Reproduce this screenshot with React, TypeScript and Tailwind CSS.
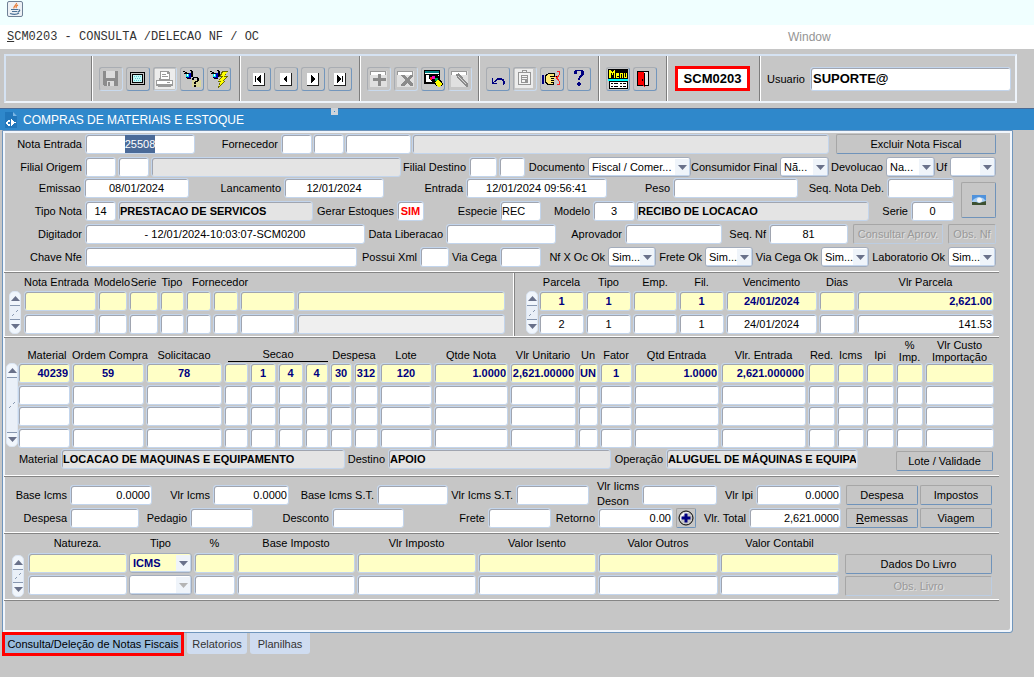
import { useEffect, useId, useRef, type ReactNode, type RefObject } from "react";
import { cx } from "class-variance-authority";

const FIELD_LOOK = {
  white: "bg-white text-black",
  info: "bg-[#e4e4e4] font-bold text-black",
  shade: "bg-[#efefef] text-black",
  current: "bg-[#ffffc6] font-bold text-[#000080]",
  alert: "bg-white font-bold text-[#ff0000]",
};

const ALIGN = {
  left: "text-left",
  center: "text-center",
  right: "text-right",
};

type Look = keyof typeof FIELD_LOOK;
type Align = keyof typeof ALIGN;

const INPUT_BASE =
  "h-5 min-w-0 rounded-[3px] border border-[#c3d5ec] px-px outline-none shadow-[inset_1px_1px_0_#a0a5b0] selection:bg-[#4a6a98] selection:text-white";

type FieldProps = {
  label?: string;
  name?: string;
  labelClass?: string;
  className: string;
  value?: string;
  align?: Align;
  look?: Look;
  inputRef?: RefObject<HTMLInputElement | null>;
};

function Label({ id, className, children }: { id: string; className?: string; children: ReactNode }) {
  return (
    <label htmlFor={id} className={cx("shrink-0 pr-[3px] text-right whitespace-nowrap", className)}>
      {children}
    </label>
  );
}

function Field({ label, name, labelClass, className, value = "", align = "left", look = "white", inputRef }: FieldProps) {
  const id = useId();
  return (
    <>
      {label && (
        <Label id={id} className={labelClass}>
          {label}
        </Label>
      )}
      <input
        id={id}
        ref={inputRef}
        aria-label={label ? undefined : name}
        defaultValue={value}
        readOnly={look === "info"}
        className={cx(INPUT_BASE, FIELD_LOOK[look], ALIGN[align], className)}
      />
    </>
  );
}

function Arrow({ down, dim }: { down?: boolean; dim?: boolean }) {
  return (
    <svg width="9" height="5" viewBox="0 0 9 5" className={dim ? "fill-[#b4b4b4]" : "fill-[#69718a]"}>
      <path d={down ? "M0 0h9L4.5 5z" : "M0 5h9L4.5 0z"} />
    </svg>
  );
}

type DropDownProps = {
  label?: string;
  name?: string;
  labelClass?: string;
  className: string;
  value?: string;
  look?: Look;
  disabled?: boolean;
};

function DropDown({ label, name, labelClass, className, value = "", look = "white", disabled }: DropDownProps) {
  const id = useId();
  return (
    <>
      {label && (
        <Label id={id} className={labelClass}>
          {label}
        </Label>
      )}
      <span className={cx("relative h-5", className)}>
        <select
          id={id}
          aria-label={label ? undefined : name}
          disabled={disabled}
          className={cx(
            "block h-5 w-full appearance-none rounded-[3px] border border-[#a3acbb] pl-[3px] leading-[18px] outline-none shadow-[inset_-1px_-1px_0_#c3d5ec]",
            FIELD_LOOK[look]
          )}
        >
          <option>{value}</option>
        </select>
        <span className="pointer-events-none absolute inset-y-0.5 right-0.5 flex w-3.5 items-center justify-center bg-[#eff4fa]">
          <Arrow down dim={disabled} />
        </span>
      </span>
    </>
  );
}

function FormButton({ className, disabled, children }: { className?: string; disabled?: boolean; children: ReactNode }) {
  return (
    <button
      type="button"
      disabled={disabled}
      className={cx(
        "flex h-5 shrink-0 items-center justify-center rounded-[2px] border border-t-[#a6a6a6] border-l-[#a6a6a6] whitespace-nowrap",
        disabled
          ? "border-r-[#bccde2] border-b-[#bccde2] text-[#999999] [text-shadow:1px_1px_0_#e2e2e2]"
          : "border-r-[#6f93ba] border-b-[#6f93ba] text-black",
        className
      )}
    >
      {children}
    </button>
  );
}

function Rule() {
  return <hr className="h-0.5 border-t border-b border-t-white border-b-[#858585]" />;
}

function ScrollBar({ className }: { className: string }) {
  return (
    <div className={cx("flex w-3 shrink-0 flex-col rounded-[5px] border border-[#dbe6f4] bg-[#f1f6fc]", className)}>
      <button type="button" aria-label="Registro anterior" className="flex h-3.5 items-center justify-center border-b border-[#8797b0]">
        <Arrow />
      </button>
      <div className="flex flex-1 items-center justify-center bg-[#eaf0f8]">
        <svg width="8" height="8" viewBox="0 0 8 8" stroke="#8a9ab2" fill="none">
          <path d="M1 7l2-2M5 3l2-2" />
        </svg>
      </div>
      <button type="button" aria-label="Proximo registro" className="flex h-3.5 items-center justify-center border-t border-[#8797b0]">
        <Arrow down />
      </button>
    </div>
  );
}

type Column = {
  name: string;
  width: string;
  align?: Align;
  list?: boolean;
  values?: string[];
  look?: Look;
};

function RecordTable({ columns, rows, rowClass, children }: { columns: Column[]; rows: number; rowClass: string; children: ReactNode }) {
  return (
    <table className="w-full table-fixed border-collapse">
      <colgroup>
        {columns.map((col) => (
          <col key={col.name} className={col.width} />
        ))}
      </colgroup>
      <thead>{children}</thead>
      <tbody>
        {Array.from({ length: rows }, (_, row) => (
          <tr key={row} className={rowClass}>
            {columns.map((col) => {
              const look = row === 0 ? "current" : col.look ?? "white";
              const value = col.values?.[row] ?? "";
              return (
                <td key={col.name} className="p-0 pr-0.5 align-top">
                  {col.list ? (
                    <DropDown name={col.name} className="block w-full" value={value} look={look} disabled={row > 0} />
                  ) : (
                    <Field name={col.name} className="block w-full" value={value} align={col.align ?? "center"} look={look} />
                  )}
                </td>
              );
            })}
          </tr>
        ))}
      </tbody>
    </table>
  );
}

function Th({ children, className, colSpan }: { children?: ReactNode; className?: string; colSpan?: number }) {
  return (
    <th colSpan={colSpan} className={cx("p-0 pr-0.5 font-normal whitespace-nowrap", className)}>
      {children}
    </th>
  );
}

const NOTA_COLUMNS: Column[] = [
  { name: "Nota Entrada", width: "w-[74px]" },
  { name: "Modelo", width: "w-[31px]" },
  { name: "Serie", width: "w-[31px]" },
  { name: "Tipo", width: "w-[26px]" },
  { name: "Fornecedor empresa", width: "w-[27px]" },
  { name: "Fornecedor filial", width: "w-[27px]" },
  { name: "Fornecedor codigo", width: "w-[57px]" },
  { name: "Fornecedor nome", width: "", look: "shade" },
];

const PARCELA_COLUMNS: Column[] = [
  { name: "Parcela", width: "w-[47px]", values: ["1", "2"] },
  { name: "Tipo", width: "w-[47px]", values: ["1", "1"] },
  { name: "Emp.", width: "w-[46px]" },
  { name: "Fil.", width: "w-[47px]", values: ["1", "1"] },
  { name: "Vencimento", width: "w-[93px]", values: ["24/01/2024", "24/01/2024"] },
  { name: "Dias", width: "w-[38px]" },
  { name: "Vlr Parcela", width: "", align: "right", values: ["2,621.00", "141.53"] },
];

const ITEM_COLUMNS: Column[] = [
  { name: "Material", width: "w-[54px]", align: "right", values: ["40239"] },
  { name: "Ordem Compra", width: "w-[74px]", values: ["59"] },
  { name: "Solicitacao", width: "w-[78px]", values: ["78"] },
  { name: "Secao 1", width: "w-[26px]" },
  { name: "Secao 2", width: "w-[28px]", values: ["1"] },
  { name: "Secao 3", width: "w-[27px]", values: ["4"] },
  { name: "Secao 4", width: "w-[25px]", values: ["4"] },
  { name: "Despesa grupo", width: "w-[24px]", values: ["30"] },
  { name: "Despesa", width: "w-[26px]", values: ["312"] },
  { name: "Lote", width: "w-[54px]", values: ["120"] },
  { name: "Qtde Nota", width: "w-[76px]", align: "right", values: ["1.0000"] },
  { name: "Vlr Unitario", width: "w-[68px]", align: "right", values: ["2,621.00000"] },
  { name: "Un", width: "w-[22px]", values: ["UN"] },
  { name: "Fator", width: "w-[34px]", values: ["1"] },
  { name: "Qtd Entrada", width: "w-[87px]", align: "right", values: ["1.0000"] },
  { name: "Vlr. Entrada", width: "w-[87px]", align: "right", values: ["2,621.000000"] },
  { name: "Red.", width: "w-[29px]" },
  { name: "Icms", width: "w-[29px]" },
  { name: "Ipi", width: "w-[30px]" },
  { name: "% Imp.", width: "w-[29px]" },
  { name: "Vlr Custo Importação", width: "" },
];

const LIVRO_COLUMNS: Column[] = [
  { name: "Natureza.", width: "w-[101px]" },
  { name: "Tipo", width: "w-[65px]", list: true, values: ["ICMS"] },
  { name: "%", width: "w-[43px]" },
  { name: "Base Imposto", width: "w-[120px]" },
  { name: "Vlr Imposto", width: "w-[121px]" },
  { name: "Valor Isento", width: "w-[120px]" },
  { name: "Valor Outros", width: "w-[122px]" },
  { name: "Valor Contabil", width: "" },
];

/* ---- Toolbar ---- */

function Sheet({ children }: { children: ReactNode }) {
  return (
    <>
      <path fill="#fff" d="M4 4h11v12H4z" />
      <path fill="#222" d="M15 4h1v13H4v-1h11z" />
      {children}
    </>
  );
}

function Torch() {
  return (
    <>
      <path fill="#000" d="M1 2h2v1H1zM3 3h2v1H3zM2 4h2v1H2zM8 1h2v1H8zM9 2h2v6H9zM4 4h5v1H4zM5 9h4v1H5zM4 7h1v2H4z" />
      <path fill="#00e5ee" d="M4 5h3v3H4z" />
      <path fill="#0000b8" d="M7 4h2v5H7zM5 8h3v1H5z" />
      <path fill="#fff" d="M5 5h1v2H5z" />
    </>
  );
}

const DISABLED_BAR = (
  <>
    <path fill="#e0e0e0" d="M1 2h17v16H1z" />
    <path fill="#979797" d="M1 2h16v4H1z" />
    <path fill="#fff" d="M2 3h14v3H2z" />
  </>
);

const TOOL_GROUPS: { name: string; disabled?: boolean; art: ReactNode }[][] = [
  [
    {
      name: "Salvar",
      disabled: true,
      art: (
        <>
          <path fill="#8c8c8c" d="M2 2h15v15H3l-1-1z" />
          <path fill="#dcdcdc" d="M5 2h9v7H5zM6 12h7v5H6z" />
          <path fill="#8c8c8c" d="M7 13h2v4H7z" />
        </>
      ),
    },
    {
      name: "Tela",
      art: (
        <>
          <path fill="#000" d="M2 3h15v13H2z" />
          <path fill="#c6c6c6" d="M3 4h13v11H3z" />
          <path fill="#000" d="M4 5h11v9H4z" />
          <path fill="#c4f8f8" d="M5 6h9v7H5z" />
          <path fill="#5ec9cd" d="M6 7h1v1H6zM8 7h1v1H8zM10 7h1v1h-1zM12 7h1v1h-1zM7 9h1v1H7zM9 9h1v1H9zM11 9h1v1h-1zM6 11h1v1H6zM8 11h1v1H8zM10 11h1v1h-1zM12 11h1v1h-1z" />
        </>
      ),
    },
    {
      name: "Imprimir",
      disabled: true,
      art: (
        <>
          <path fill="#ececec" d="M0 0h20v20H0z" />
          <path fill="#9a9a9a" d="M5 2h8l2 2v7H4V9h1zM1 11h17v6H1z" />
          <path fill="#fff" d="M6 3h6v2h2v5H6zM2 12h15v3H2z" />
          <path fill="#9a9a9a" d="M7 5h4v1H7zM7 7h6v1H7zM12 13h3v1h-3zM3 17h13v1H3z" />
        </>
      ),
    },
    {
      name: "Entrar consulta",
      art: (
        <>
          <Torch />
          <path fill="#ece870" d="M10 11h9v7h-9z" opacity=".5" />
          <path fill="#000" d="M11 8h5v1h-5zM10 9h2v2h-2zM15 9h2v3h-2zM13 12h3v1h-3zM12 13h2v2h-2zM12 16h2v2h-2z" />
        </>
      ),
    },
    {
      name: "Executar consulta",
      art: (
        <>
          <Torch />
          <path fill="#6b6b00" d="M13 2h6l-3 5h3l-5 5h2l-7 7 2-6H9l3-5h-2z" />
          <path fill="#ffff00" d="M14 3h4l-3 5h3l-5 4h2l-5 5 2-5h-2l4-5h-2z" />
        </>
      ),
    },
  ],
  [
    { name: "Primeiro", art: <Sheet><path d="M6 7h1v6H6zM12 6v8l-5-4z" /></Sheet> },
    { name: "Anterior", art: <Sheet><path d="M11 6v8l-4-4z" /></Sheet> },
    { name: "Proximo", art: <Sheet><path d="M8 6v8l4-4z" /></Sheet> },
    { name: "Ultimo", art: <Sheet><path d="M7 6v8l5-4zM12 7h1v6h-1z" /></Sheet> },
  ],
  [
    {
      name: "Inserir registro",
      disabled: true,
      art: (
        <>
          {DISABLED_BAR}
          <path fill="#8b8b8b" d="M9 5h3v4h5v3h-5v5H9v-5H4V9h5z" />
        </>
      ),
    },
    {
      name: "Excluir registro",
      disabled: true,
      art: (
        <>
          {DISABLED_BAR}
          <path fill="#8b8b8b" d="M5 6h3l3 3 3-3h3v1l-4 4 4 4v2h-3l-3-3-3 3H5v-2l4-4-4-4z" />
        </>
      ),
    },
    {
      name: "Lista de valores",
      art: (
        <>
          <path fill="#000" d="M1 1h16v14H1z" />
          <path fill="#fff" d="M3 6h13v7H3z" />
          <path fill="#008080" d="M2 2h14v2H2z" />
          <path fill="#fff" d="M2 4h14v1H2z" />
          <path fill="#000" d="M6 6h9l5 9-2 2h-4L6 10z" />
          <path fill="#ff00c8" d="M9 7h3v3H9z" />
          <path fill="#ff2020" d="M7 8h2v3H7z" />
          <path fill="#00b050" d="M12 9h3v3h-3z" />
          <path fill="#ffff00" d="M12 13l3-2 4 4-2 3h-2z" />
        </>
      ),
    },
    {
      name: "Editar",
      disabled: true,
      art: (
        <>
          {DISABLED_BAR}
          <path fill="#8b8b8b" d="M5 6l4-2 9 11v3h-2L7 8z" />
          <path fill="#d6d6d6" d="M8 6l8 9v1L8 8z" />
        </>
      ),
    },
  ],
  [
    {
      name: "Desfazer",
      art: (
        <path
          fill="#000080"
          d="M4 9h1v4h1v1h3v1H4zM6 12h1v-1h1v-1h1V9h5v1h2v2h1v3h-1v1h-1v-4h-1v-1H9v1H8v1H6z"
        />
      ),
    },
    {
      name: "Colar",
      disabled: true,
      art: (
        <>
          <path fill="#ececec" d="M0 0h18v19H0z" />
          <path fill="#959595" d="M3 3h13v13H3z" />
          <path fill="#f4f4f4" d="M4 4h11v11H4z" />
          <path fill="#959595" d="M7 1h5v3H7zM6 6h7v8H6z" />
          <path fill="#f4f4f4" d="M8 2h3v1H8zM7 7h5v1H7zM7 9h5v1H7zM7 11h3v2H7z" />
        </>
      ),
    },
    {
      name: "Recortar",
      art: (
        <>
          <path fill="#000080" d="M0 6h2v9H0z" />
          <path fill="#000" d="M3 6l4-2h6v3h2v2h-3v7H6l-3-2z" />
          <path fill="#ffe873" d="M4 7l3-2h5v2H8v1h6v1H9v1h3v1H9v1h3v1H9v1h2v1H6l-2-2z" />
          <path fill="none" stroke="#ff2020" d="M14.500 2.500h3v3l-4 5M14.500 15.500h3v-3l-4-5" />
        </>
      ),
    },
    {
      name: "Ajuda",
      art: <path fill="#000080" d="M6 1h8v1h1v4h-1v1h-1v1h-1v1h-1v2H9V9h1V7h1V6h1V2H8v3H5V2h1zM9 13h2v1h1v2h-1v1H9v-1H8v-2h1z" />,
    },
  ],
  [
    {
      name: "Menu",
      art: (
        <>
          <path fill="#000" d="M0 0h20v10H0zM1 11h19v9H1z" />
          <path
            fill="#ffff00"
            d="M1 1h2v1h1v1h1V2h1V1h1v8H6V4H5v2H4V4H3v5H1zM8 4h3v3H9v1h2v1H8zM12 4h3v5h-1V5h-1v4h-1zM16 4h1v4h1V4h1v5h-3z"
          />
          <path fill="#00ffff" d="M0 10h20v2H0z" />
          <path fill="#fff" d="M2 13h17v6H2z" />
          <path fill="#000" d="M3 14h2v1H3zM6 14h4v1H6zM12 14h2v1h-2zM15 14h3v1h-3zM3 17h2v1H3zM6 17h4v1H6zM12 17h2v1h-2zM15 17h3v1h-3z" />
        </>
      ),
    },
    {
      name: "Sair",
      art: (
        <>
          <path fill="#000" d="M2 2h12v15H2z" />
          <path fill="#e8e8e8" d="M8 3h5v13H8z" />
          <path fill="#ff0000" d="M3 3h5l2 2v13l-3-2H3z" />
          <path fill="#000" d="M9 4h1v13H9zM7 10h1v2H7z" />
        </>
      ),
    },
  ],
];

const TOOL_GROUP_WIDTHS = ["w-[148px]", "w-[120px]", "w-[119px]", "w-[120px]", "w-[68px]"];

function ToolBar() {
  const userId = useId();
  return (
    <div className="bg-[#c6c6c6] py-[5px] pr-[17px] pl-1">
      <div className="flex h-[49px] items-stretch border-2 border-t-[#d5e2f2] border-r-[#eef4fb] border-b-[#eef4fb] border-l-[#d5e2f2]">
        <div className="w-[86px] shrink-0 border-r border-[#7d7d7d]" />
        {TOOL_GROUPS.map((group, i) => (
          <div
            key={i}
            className={cx("flex shrink-0 items-center gap-[3px] border-r border-l border-r-[#7d7d7d] border-l-white pl-1.5", TOOL_GROUP_WIDTHS[i])}
          >
            {group.map((tool) => (
              <button
                key={tool.name}
                type="button"
                aria-label={tool.name}
                disabled={tool.disabled}
                className={cx(
                  "flex size-6 shrink-0 items-center justify-center rounded-[3px] border border-t-[#a9adb3] border-l-[#a9adb3]",
                  tool.disabled ? "border-r-[#c9daee] border-b-[#c9daee]" : "border-r-[#7396bc] border-b-[#7396bc]"
                )}
              >
                <svg width="20" height="20" viewBox="0 0 20 20" className="shrink-0" shapeRendering="crispEdges">
                  {tool.art}
                </svg>
              </button>
            ))}
          </div>
        ))}
        <div className="flex w-[93px] shrink-0 items-center border-r border-l border-r-[#7d7d7d] border-l-white pl-[7px]">
          <input
            aria-label="Programa"
            defaultValue="SCM0203"
            className="h-[25px] w-[75px] border-3 border-[#ff0000] bg-white text-center text-[13px] font-bold outline-none"
          />
        </div>
        <div className="flex flex-1 items-center border-l border-white pr-1 pl-1.5">
          <label htmlFor={userId} className="w-[43px] shrink-0">
            Usuario
          </label>
          <input
            id={userId}
            defaultValue="SUPORTE@"
            className="h-6 min-w-0 flex-1 rounded-[3px] border border-[#c3d5ec] bg-white px-0.5 text-[13px] font-bold shadow-[inset_1px_1px_0_#a0a5b0] outline-none"
          />
        </div>
      </div>
    </div>
  );
}

function JavaIcon() {
  return (
    <svg width="16" height="16" viewBox="0 0 16 16">
      <rect x=".5" y=".5" width="15" height="15" rx="1.500" fill="#edf1f5" stroke="#6f8196" />
      <path d="M9.500 2C10 4 6 5 7 7.500M11 4C9 5 8.500 6 9.500 7" fill="none" stroke="#e8762c" strokeWidth="1.200" />
      <path d="M4 8.500h7M5 10.500h5M3 12.500c3 1 7 1 9-.500M11.500 8.500c2 0 1.500 2-1 2.500" fill="none" stroke="#4a7196" strokeWidth="1.200" />
    </svg>
  );
}

/* ---- Blocks of the form ---- */

function HeaderBlock() {
  const notaRef = useRef<HTMLInputElement>(null);

  useEffect(() => {
    notaRef.current?.focus();
    notaRef.current?.select();
  }, []);

  return (
    <section className="h-[137px] pr-[3px]">
      <div className="flex h-[23px]">
        <Field label="Nota Entrada" labelClass="w-[81px]" className="w-[110px]" value="25508" align="center" inputRef={notaRef} />
        <Field label="Fornecedor" labelClass="w-[86px]" className="w-[31px]" />
        <Field name="Fornecedor filial" className="ml-px w-[31px]" />
        <Field name="Fornecedor codigo" className="ml-px w-[66px]" />
        <Field name="Fornecedor nome" className="ml-px flex-1" look="info" />
        <FormButton className="ml-[7px] w-[160px]">Excluir Nota Fiscal</FormButton>
      </div>
      <div className="flex h-[21px]">
        <Field label="Filial Origem" labelClass="w-[81px]" className="w-[31px]" />
        <Field name="Filial Origem codigo" className="ml-0.5 w-[31px]" />
        <Field name="Filial Origem nome" className="ml-0.5 min-w-0 flex-1" look="info" />
        <Field label="Filial Destino" labelClass="w-[68px]" className="w-[28px]" />
        <Field name="Filial Destino codigo" className="ml-0.5 w-[26px]" />
        <DropDown label="Documento" labelClass="w-[63px]" className="w-[103px]" value="Fiscal / Comer..." />
        <DropDown label="Consumidor Final" labelClass="w-[89px]" className="w-[49px]" value="Nã..." />
        <DropDown label="Devolucao" labelClass="w-[57px]" className="w-[49px]" value="Na..." />
        <DropDown label="Uf" labelClass="w-[15px]" className="w-[46px]" />
      </div>
      <div className="flex">
        <div className="min-w-0 flex-1">
          <div className="flex h-[23px]">
            <Field label="Emissao" labelClass="w-[80px]" className="w-[105px]" value="08/01/2024" align="center" />
            <Field label="Lancamento" labelClass="w-[95px]" className="w-[100px]" value="12/01/2024" align="center" />
            <Field label="Entrada" labelClass="w-[82px]" className="w-[141px]" value="12/01/2024 09:56:41" align="center" />
            <Field label="Peso" labelClass="w-[66px]" className="flex-1" />
            <Field label="Seq. Nota Deb." labelClass="w-[89px]" className="w-[67px]" />
          </div>
          <div className="flex h-[23px]">
            <Field label="Tipo Nota" labelClass="w-[81px]" className="w-[31px]" value="14" align="center" />
            <Field name="Descricao tipo nota" className="ml-0.5 w-[195px]" value="PRESTACAO DE SERVICOS" look="info" />
            <Field label="Gerar Estoques" labelClass="w-[84px]" className="w-[27px]" value="SIM" align="center" look="alert" />
            <Field label="Especie" labelClass="w-[76px]" className="w-[41px]" value="REC" />
            <Field label="Modelo" labelClass="w-[52px]" className="w-[42px]" value="3" align="center" />
            <Field name="Descricao modelo" className="ml-px flex-1" value="RECIBO DE LOCACAO" look="info" />
            <Field label="Serie" labelClass="w-[42px]" className="w-[43px]" value="0" align="center" />
          </div>
        </div>
        <button
          type="button"
          aria-label="Imagens"
          className="mt-1 ml-[7px] flex h-9 w-[35px] shrink-0 items-center justify-center rounded-[2px] border border-t-[#a6a6a6] border-r-[#6f93ba] border-b-[#6f93ba] border-l-[#a6a6a6]"
        >
          <svg width="14" height="11" viewBox="0 0 14 11">
            <path fill="#4f92dc" d="M0 0h14v6H0z" />
            <path fill="#a8cdf2" d="M2 4l4-2 5 1 3 3v2H0V6z" />
            <path fill="#3d5131" d="M0 7h4l3 1 7-2v4H0z" />
            <circle cx="7.500" cy="5" r="2.500" fill="#f3f5f6" />
          </svg>
        </button>
      </div>
      <div className="flex h-[23px]">
        <Field label="Digitador" labelClass="w-[81px]" className="flex-1" value="- 12/01/2024-10:03:07-SCM0200" align="center" />
        <Field label="Data Liberacao" labelClass="w-[81px]" className="w-[110px]" />
        <Field label="Aprovador" labelClass="w-[69px]" className="w-[97px]" />
        <Field label="Seq. Nf" labelClass="w-[47px]" className="w-[79px]" value="81" align="center" />
        <FormButton className="ml-[5px] w-[90px]" disabled>
          Consultar Aprov.
        </FormButton>
        <FormButton className="ml-[5px] w-[48px]" disabled>
          Obs. Nf
        </FormButton>
      </div>
      <div className="flex h-6">
        <Field label="Chave Nfe" labelClass="w-[81px]" className="flex-1" />
        <Field label="Possui Xml" labelClass="w-[63px]" className="w-[29px]" />
        <Field label="Via Cega" labelClass="w-[51px]" className="w-[41px]" />
        <DropDown label="Nf X Oc Ok" labelClass="w-[67px]" className="w-[48px]" value="Sim..." />
        <DropDown label="Frete Ok" labelClass="w-[49px]" className="w-[48px]" value="Sim..." />
        <DropDown label="Via Cega Ok" labelClass="w-[68px]" className="w-[48px]" value="Sim..." />
        <DropDown label="Laboratorio Ok" labelClass="w-[79px]" className="w-[48px]" value="Sim..." />
      </div>
    </section>
  );
}

function ReferenceBlock() {
  return (
    <section className="flex h-[63px]">
      <div className="flex min-w-0 flex-1 border-r border-white pr-1.5 pl-[5px]">
        <ScrollBar className="mt-[18px] mr-[3px] h-[43px]" />
        <RecordTable columns={NOTA_COLUMNS} rows={2} rowClass="h-[21px]">
          <tr className="h-[18px] leading-[18px]">
            <Th className="text-left">Nota Entrada</Th>
            <Th className="text-left">
              <span className="-ml-1">Modelo</span>
            </Th>
            <Th>Serie</Th>
            <Th>Tipo</Th>
            <Th colSpan={4} className="pl-1.5 text-left">
              Fornecedor
            </Th>
          </tr>
        </RecordTable>
      </div>
      <div className="flex w-[485px] border-l border-[#858585] pr-[3px] pl-[11px]">
        <ScrollBar className="mt-[18px] mr-px h-[43px]" />
        <RecordTable columns={PARCELA_COLUMNS} rows={2} rowClass="h-[21px]">
          <tr className="h-[18px] leading-[18px]">
            {PARCELA_COLUMNS.map((col) => (
              <Th key={col.name}>{col.name}</Th>
            ))}
          </tr>
        </RecordTable>
      </div>
    </section>
  );
}

function ItemsBlock() {
  return (
    <section className="h-[137px] pr-[3px]">
      <div className="flex h-[111px] pl-0.5">
        <ScrollBar className="mt-[25px] h-[84px]" />
        <RecordTable columns={ITEM_COLUMNS} rows={4} rowClass="h-[21px]">
          <tr className="h-[25px] align-bottom leading-[15px]">
            <Th>
              <span className="block pl-1.5">Material</span>
            </Th>
            <Th>Ordem Compra</Th>
            <Th>Solicitacao</Th>
            <Th colSpan={4} className="px-1 pb-px">
              <span className="block border-b border-black leading-[13px]">Secao</span>
            </Th>
            <Th colSpan={2}>Despesa</Th>
            <Th>Lote</Th>
            <Th>Qtde Nota</Th>
            <Th>Vlr Unitario</Th>
            <Th>Un</Th>
            <Th>Fator</Th>
            <Th>Qtd Entrada</Th>
            <Th>Vlr. Entrada</Th>
            <Th>Red.</Th>
            <Th>Icms</Th>
            <Th>Ipi</Th>
            <Th className="leading-3">
              %<br />
              Imp.
            </Th>
            <Th className="leading-3">
              Vlr Custo
              <br />
              Importação
            </Th>
          </tr>
        </RecordTable>
      </div>
      <div className="flex">
        <Field label="Material" labelClass="w-[57px]" className="flex-1" value="LOCACAO DE MAQUINAS E EQUIPAMENTO" look="info" />
        <Field label="Destino" labelClass="w-[43px]" className="w-[223px]" value="APOIO" look="info" />
        <Field label="Operação" labelClass="w-[55px]" className="w-[192px]" value="ALUGUEL DE MÁQUINAS E EQUIPAM" look="info" />
        <FormButton className="mt-0.5 mr-[3px] ml-[38px] w-[97px]">Lote / Validade</FormButton>
      </div>
    </section>
  );
}

function TotalsBlock() {
  const desonId = useId();
  return (
    <section className="flex h-[55px] pt-2 pr-[7px]">
      <div className="min-w-0 flex-1">
        <div className="flex h-[23px]">
          <Field label="Base Icms" labelClass="w-[66px]" className="w-[82px]" value="0.0000" align="right" />
          <Field label="Vlr Icms" labelClass="w-[61px]" className="w-[76px]" value="0.0000" align="right" />
          <Field label="Base Icms S.T." labelClass="w-[88px]" className="w-[71px]" />
          <Field label="Vlr Icms S.T." labelClass="w-[68px]" className="w-[73px]" />
          <label htmlFor={desonId} className="-mt-1.5 w-[53px] shrink-0 pl-2 leading-[15px] whitespace-nowrap">
            Vlr Iicms
            <br />
            Deson
          </label>
          <input id={desonId} className={cx(INPUT_BASE, "w-[75px] bg-white")} />
          <Field label="Vlr Ipi" labelClass="w-[39px]" className="flex-1" value="0.0000" align="right" />
        </div>
        <div className="flex h-[23px]">
          <Field label="Despesa" labelClass="w-[66px]" className="w-[69px]" />
          <Field label="Pedagio" labelClass="w-[51px]" className="w-[63px]" />
          <Field label="Desconto" labelClass="w-[79px]" className="w-[72px]" />
          <Field label="Frete" labelClass="w-[84px]" className="w-[63px]" />
          <Field label="Retorno" labelClass="w-[47px]" className="w-[75px]" value="0.00" align="right" />
          <button
            type="button"
            aria-label="Detalhar retorno"
            className="ml-[3px] flex size-5 shrink-0 items-center justify-center rounded-[2px] border border-t-[#a6a6a6] border-r-[#6f93ba] border-b-[#6f93ba] border-l-[#a6a6a6]"
          >
            <svg width="16" height="16" viewBox="0 0 16 16">
              <circle cx="8" cy="8" r="7" fill="#c6c6c6" stroke="#000" />
              <path d="M3 10a6 6 0 0 1 7-7" fill="none" stroke="#fff" strokeWidth="1.500" />
              <path fill="#000080" d="M6.500 3.500h3v3h3v3h-3v3h-3v-3h-3v-3h3z" />
            </svg>
          </button>
          <Field label="Vlr. Total" labelClass="w-[53px]" className="flex-1" value="2,621.0000" align="right" />
        </div>
      </div>
      <div className="ml-[5px] grid shrink-0 grid-cols-[72px_72px] content-start gap-x-0.5 gap-y-[3px]">
        <FormButton>Despesa</FormButton>
        <FormButton>Impostos</FormButton>
        <FormButton>
          <span>
            <u>R</u>emessas
          </span>
        </FormButton>
        <FormButton>Viagem</FormButton>
      </div>
    </section>
  );
}

function LedgerBlock() {
  return (
    <section className="flex h-[65px] pr-[7px] pl-2">
      <ScrollBar className="mt-[21px] mr-1 h-[42px]" />
      <div className="min-w-0 flex-1">
        <RecordTable columns={LIVRO_COLUMNS} rows={2} rowClass="h-[22px]">
          <tr className="h-[19px] leading-[19px]">
            {LIVRO_COLUMNS.map((col) => (
              <Th key={col.name}>{col.name}</Th>
            ))}
          </tr>
        </RecordTable>
      </div>
      <div className="ml-1 flex w-[147px] shrink-0 flex-col gap-0.5 pt-5">
        <FormButton>Dados Do Livro</FormButton>
        <FormButton disabled>Obs. Livro</FormButton>
      </div>
    </section>
  );
}

const TABS = ["Relatorios", "Planilhas"];

export default function App() {
  return (
    <div className="min-h-screen bg-[#c6c6c6] font-['Liberation_Sans',Arial,sans-serif] text-[11px] leading-5 text-black">
      <div className="h-[25px] bg-[#f0ffff] pt-px pl-[7px]">
        <JavaIcon />
      </div>
      <nav className="flex h-6 items-center bg-white pl-[7px] text-[12px]">
        <a href="#programa" className="w-[781px] font-['Liberation_Mono','Courier_New',monospace] text-[#333333]">
          <u>S</u>CM0203 - CONSULTA /DELECAO NF / OC
        </a>
        <a href="#window" className="text-[#949494]">
          Window
        </a>
      </nav>
      <ToolBar />

      <header className="relative flex h-[22px] items-center border-t border-[#4b6a94] bg-[#2f88cb] pl-[5px] text-[12px] text-white">
        <svg width="12" height="16" viewBox="0 0 12 16" className="mr-1.5">
          <path fill="#2277bb" d="M0 0h8l4 4v12H0z" />
          <path fill="#7db7e4" d="M8 0l4 4H8z" />
          <path fill="#fff" d="M5 7v1H3v1H2v1H1v2h1v1h1v1h2v-2H3v-2h2zM6 7h1v1h1v1h1v1h2v1H9v1H8v1H7v1H6z" />
        </svg>
        <h1>COMPRAS DE MATERIAIS E ESTOQUE</h1>
        <span className="absolute -top-px left-[331px] flex size-[7px] items-center justify-center bg-[#cdd3da]">
          <span className="size-px bg-[#2f88cb]" />
        </span>
      </header>

      <main className="mr-[21px] ml-0.5 rounded-br-[3px] border border-[#6f95bc] pt-[3px] pr-[13px] pb-[31px] pl-px shadow-[inset_2px_2px_0_#f1f6fc,inset_-2px_-2px_0_#f1f6fc]">
        <HeaderBlock />
        <Rule />
        <ReferenceBlock />
        <Rule />
        <ItemsBlock />
        <Rule />
        <TotalsBlock />
        <Rule />
        <LedgerBlock />
        <Rule />
      </main>

      <div role="tablist" className="flex items-start gap-[3px] pl-0.5">
        <button type="button" role="tab" aria-selected="true" className="-mt-px h-6 w-[182px] border-3 border-[#ff0000] bg-[#98bbdc] leading-none whitespace-nowrap">
          Consulta/Deleção de Notas Fiscais
        </button>
        {TABS.map((tab) => (
          <button key={tab} type="button" role="tab" aria-selected="false" className="h-[21px] w-[60px] rounded-b-[3px] bg-[#cfdcf0] text-[#333333]">
            {tab}
          </button>
        ))}
      </div>
    </div>
  );
}
